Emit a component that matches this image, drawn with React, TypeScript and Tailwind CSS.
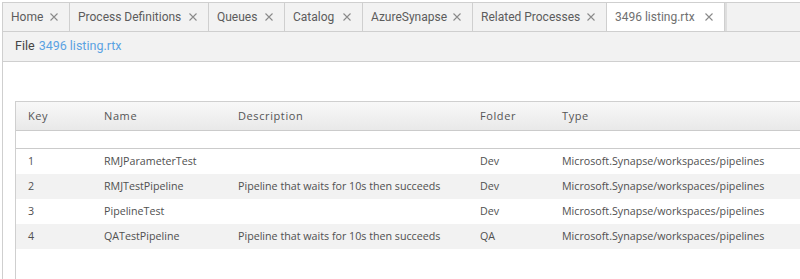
const tabs = [
  { label: "Home", w: "w-[67px]" },
  { label: "Process Definitions", w: "w-[139px]" },
  { label: "Queues", w: "w-[76px]" },
  { label: "Catalog", w: "w-[78px]" },
  { label: "AzureSynapse", w: "w-[110px]" },
  { label: "Related Processes", w: "w-[134px]" },
  { label: "3496 listing.rtx", w: "w-[118px]", active: true },
];

const rows = [
  { key: "1", name: "RMJParameterTest", desc: "", folder: "Dev" },
  { key: "2", name: "RMJTestPipeline", desc: "Pipeline that waits for 10s then succeeds", folder: "Dev" },
  { key: "3", name: "PipelineTest", desc: "", folder: "Dev" },
  { key: "4", name: "QATestPipeline", desc: "Pipeline that waits for 10s then succeeds", folder: "QA" },
];

const cols = ["w-[76px]", "w-[134px]", "w-[242px]", "w-[82px]", "w-[262px]"];

function CloseIcon() {
  return (
    <svg width="8" height="8" viewBox="0 0 8 8" className="shrink-0">
      <path d="M0.5 0.5 L7.5 7.5 M7.5 0.5 L0.5 7.5" stroke="#8a8a8a" strokeWidth="1.1" />
    </svg>
  );
}

export default function App() {
  return (
    <div className="h-[279px] w-[800px] overflow-hidden bg-white pl-[2px] pt-[2px]">
      <div className="flex h-full flex-col border-l border-t border-[#cfcfcf]">
        {/* tab strip */}
        <div className="flex h-[29px] border-b border-[#cfcfcf] bg-[#f2f2f2] font-['Roboto',sans-serif] text-[12px] text-[#5c5c5c]">
          {tabs.map((t) => (
            <div
              key={t.label}
              className={`flex ${t.w} shrink-0 items-center justify-between border-r border-[#cfcfcf] pl-[8px] pr-[11px] ${
                t.active ? "bg-white text-[#707070]" : ""
              }`}
            >
              <span>{t.label}</span>
              <CloseIcon />
            </div>
          ))}
          <div className="flex-1 border-l-2 border-[#dedede]" />
        </div>

        {/* file bar */}
        <div className="flex h-[30px] items-center border-b border-[#cfcfcf] bg-[#f2f2f2] pl-[12px] font-['Roboto',sans-serif] text-[12.5px]">
          <span className="text-[#444]">File</span>
          <span className="ml-[4px] text-[#5aa2e2]">3496 listing.rtx</span>
        </div>

        {/* grid */}
        <div className="ml-[12px] mt-[39px] flex-1 border-l border-t border-[#cfcfcf] font-['Open_Sans',sans-serif]">
          <div className="flex h-[29px] items-center border-b border-[#cbcbcb] bg-gradient-to-b from-[#f8f8f8] to-[#e9e9e9] text-[11px] tracking-[0.6px] text-[#555]">
            {["Key", "Name", "Description", "Folder", "Type"].map((h, i) => (
              <div key={h} className={`${cols[i]} shrink-0 pl-[12px]`}>
                {h}
              </div>
            ))}
          </div>
          <div className="h-[18px] border-b border-[#cbcbcb]" />
          {rows.map((r, i) => (
            <div
              key={r.key}
              className={`flex h-[25px] items-center text-[10.7px] text-[#505050] ${i % 2 === 1 ? "bg-[#f2f2f2]" : ""}`}
            >
              <div className={`${cols[0]} shrink-0 pl-[12px]`}>{r.key}</div>
              <div className={`${cols[1]} shrink-0 pl-[12px]`}>{r.name}</div>
              <div className={`${cols[2]} shrink-0 pl-[12px]`}>{r.desc}</div>
              <div className={`${cols[3]} shrink-0 pl-[12px]`}>{r.folder}</div>
              <div className={`${cols[4]} shrink-0 pl-[12px]`}>Microsoft.Synapse/workspaces/pipelines</div>
            </div>
          ))}
        </div>
      </div>
    </div>
  );
}
